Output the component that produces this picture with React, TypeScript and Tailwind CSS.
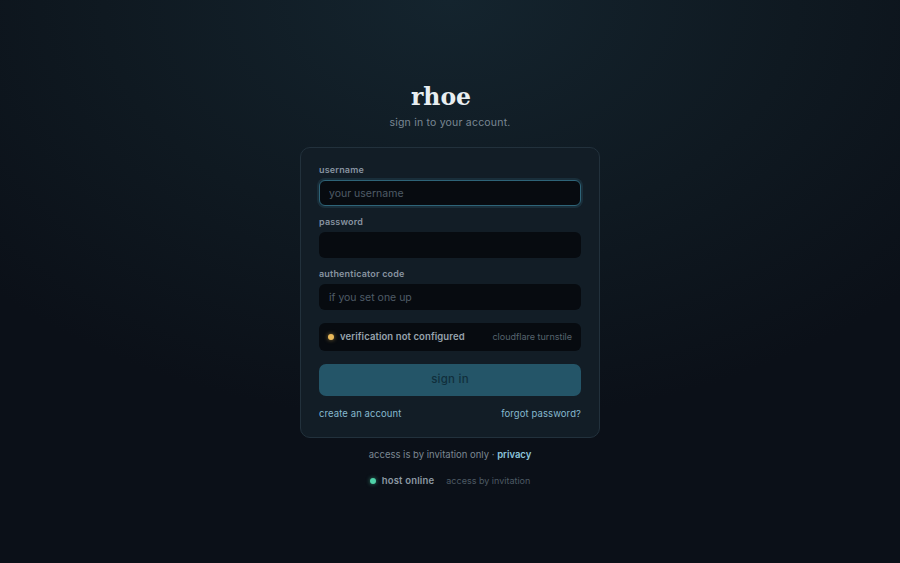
const SANS = 'font-["Inter","DejaVu_Sans",sans-serif]'

function Field({ label, placeholder, type = 'text', focused = false }: { label: string; placeholder?: string; type?: string; focused?: boolean }) {
  return (
    <label className="flex flex-col">
      <span className="text-[9px] font-semibold leading-[12px] tracking-[0.02em] text-[#8793a0]">{label}</span>
      <input
        type={type}
        placeholder={placeholder}
        className={
          'mt-[4px] h-[26px] w-full rounded-[6px] bg-[#070b10] px-[9px] text-[10.5px] text-[#cfd8de] outline-none placeholder:text-[#4f5c67] ' +
          (focused ? 'border border-[#2e6478] shadow-[0_0_0_2px_rgba(46,100,120,0.25)]' : 'border border-transparent')
        }
      />
    </label>
  )
}

export default function App() {
  return (
    <div
      className={`flex min-h-[563px] w-full flex-col items-center bg-[#0b1018] bg-[radial-gradient(ellipse_70%_75%_at_50%_0%,#14242e_0%,#0f1921_55%,#0b1018_100%)] ${SANS}`}
    >
      {/* wordmark sits a touch left of centre in the original */}
      <h1 className='mt-[82px] pr-[18px] font-["DejaVu_Serif","Liberation_Serif",serif] text-[23.5px] font-bold leading-[30px] text-[#e8eef1]'>
        rhoe
      </h1>
      <p className="mt-[4px] text-[10.5px] leading-[14px] tracking-[0.02em] text-[#7a8894]">sign in to your account.</p>

      <div className="mt-[17px] flex w-[300px] flex-col rounded-[10px] border border-[#22313c] bg-[#121d26] px-[18px] pb-[17px] pt-[16px]">
        <div className="flex flex-col gap-[10px]">
          <Field label="username" placeholder="your username" focused />
          <Field label="password" type="password" />
          <Field label="authenticator code" placeholder="if you set one up" />
        </div>

        <div className="mt-[13px] flex h-[28px] items-center justify-between rounded-[6px] bg-[#070b10] px-[9px]">
          <div className="flex items-center gap-[6px]">
            <span className="h-[6px] w-[6px] rounded-full bg-[#e9b95a] shadow-[0_0_4px_rgba(233,185,90,0.6)]" />
            <span className="text-[9.5px] font-semibold tracking-[0.01em] text-[#97a3ad]">verification not configured</span>
          </div>
          <span className="text-[9px] text-[#56636e]">cloudflare turnstile</span>
        </div>

        <button
          type="button"
          className="mt-[13px] h-[32px] w-full rounded-[7px] bg-[#245568] text-[11.5px] font-medium tracking-[0.02em] text-[#112f3c]"
        >
          sign in
        </button>

        <div className="mt-[12px] flex items-center justify-between text-[9.5px] leading-[12px] tracking-[0.01em] text-[#86b9cf]">
          <a href="#">create an account</a>
          <a href="#">forgot password?</a>
        </div>
      </div>

      <p className="mt-[11px] text-[9.5px] leading-[12px] text-[#7b8792]">
        access is by invitation only · <a href="#" className="font-semibold text-[#8cc4dc]">privacy</a>
      </p>

      <div className="mt-[13px] flex items-center gap-[12px]">
        <div className="flex items-center gap-[6px]">
          <span className="h-[6px] w-[6px] rounded-full bg-[#4fd1a8] shadow-[0_0_4px_rgba(79,209,168,0.6)]" />
          <span className="text-[9.5px] font-semibold tracking-[0.02em] text-[#8d99a3]">host online</span>
        </div>
        <span className="text-[9px] text-[#4d5a64]">access by invitation</span>
      </div>
    </div>
  )
}
